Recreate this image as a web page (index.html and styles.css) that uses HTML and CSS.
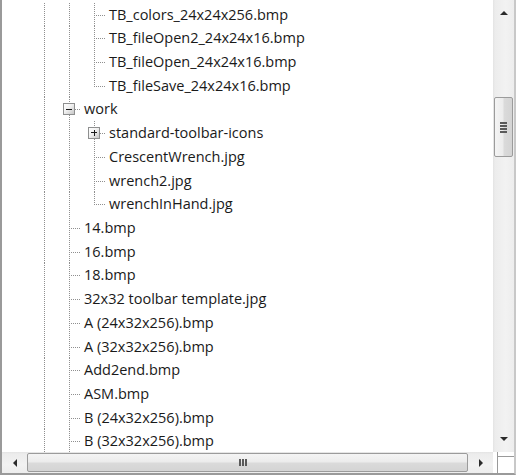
FILE: index.html
```html
<!DOCTYPE html>
<html>
<head>
<meta charset="utf-8">
<link rel="stylesheet" href="styles.css">
</head>
<body>
<div class="frame">
  <div class="view">
    <div class="tree">
      <div class="row"><span class="g"></span><span class="g v"></span><span class="g v"></span><span class="g t"></span><span class="label">TB_colors_24x24x256.bmp</span></div>
      <div class="row"><span class="g"></span><span class="g v"></span><span class="g v"></span><span class="g t"></span><span class="label">TB_fileOpen2_24x24x16.bmp</span></div>
      <div class="row"><span class="g"></span><span class="g v"></span><span class="g v"></span><span class="g t"></span><span class="label">TB_fileOpen_24x24x16.bmp</span></div>
      <div class="row"><span class="g"></span><span class="g v"></span><span class="g v"></span><span class="g l"></span><span class="label">TB_fileSave_24x24x16.bmp</span></div>
      <div class="row"><span class="g"></span><span class="g v"></span><span class="g t"><span class="box minus"></span></span><span class="label">work</span></div>
      <div class="row"><span class="g"></span><span class="g v"></span><span class="g v"></span><span class="g t"><span class="box plus"></span></span><span class="label">standard-toolbar-icons</span></div>
      <div class="row"><span class="g"></span><span class="g v"></span><span class="g v"></span><span class="g t"></span><span class="label">CrescentWrench.jpg</span></div>
      <div class="row"><span class="g"></span><span class="g v"></span><span class="g v"></span><span class="g t"></span><span class="label">wrench2.jpg</span></div>
      <div class="row"><span class="g"></span><span class="g v"></span><span class="g v"></span><span class="g l"></span><span class="label">wrenchInHand.jpg</span></div>
      <div class="row"><span class="g"></span><span class="g v"></span><span class="g t"></span><span class="label">14.bmp</span></div>
      <div class="row"><span class="g"></span><span class="g v"></span><span class="g t"></span><span class="label">16.bmp</span></div>
      <div class="row"><span class="g"></span><span class="g v"></span><span class="g t"></span><span class="label">18.bmp</span></div>
      <div class="row"><span class="g"></span><span class="g v"></span><span class="g t"></span><span class="label">32x32 toolbar template.jpg</span></div>
      <div class="row"><span class="g"></span><span class="g v"></span><span class="g t"></span><span class="label">A (24x32x256).bmp</span></div>
      <div class="row"><span class="g"></span><span class="g v"></span><span class="g t"></span><span class="label">A (32x32x256).bmp</span></div>
      <div class="row"><span class="g"></span><span class="g v"></span><span class="g t"></span><span class="label">Add2end.bmp</span></div>
      <div class="row"><span class="g"></span><span class="g v"></span><span class="g t"></span><span class="label">ASM.bmp</span></div>
      <div class="row"><span class="g"></span><span class="g v"></span><span class="g t"></span><span class="label">B (24x32x256).bmp</span></div>
      <div class="row"><span class="g"></span><span class="g v"></span><span class="g t"></span><span class="label">B (32x32x256).bmp</span></div>
    </div>
    <div class="vscroll">
      <div class="btn"><span class="arr up"></span></div>
      <div class="track">
        <div class="sp1"></div>
        <div class="thumb v"><span class="grip"><i></i><i></i><i></i><i></i></span></div>
        <div class="sp2"></div>
      </div>
      <div class="btn"><span class="arr down"></span></div>
    </div>
    <div class="hscroll">
      <div class="btn"><span class="arr left"></span></div>
      <div class="track h">
        <div class="thumb h"><span class="grip"><i></i><i></i><i></i></span></div>
      </div>
      <div class="btn"><span class="arr right"></span></div>
    </div>
    <div class="corner"><span class="cv"></span><span class="ch"></span></div>
  </div>
</div>
</body>
</html>
```

FILE: styles.css
```css
html, body { margin: 0; padding: 0; background: #fff; }
.frame {
  width: 516px;
  height: 475px;
  box-sizing: border-box;
  border-left: 2px solid #9a9a9a;
  border-right: 2px solid #c8c8c8;
  border-bottom: 2px solid #9a9a9a;
  overflow: hidden;
}
.view {
  display: grid;
  grid-template-columns: 491px 21px;
  grid-template-rows: 452px 21px;
  height: 473px;
}
.tree {
  padding-top: 2.5px;
  overflow: hidden;
  font-family: "Open Sans", sans-serif;
  font-size: 14.5px;
  color: #1a1a1a;
}
.row {
  display: flex;
  align-items: stretch;
  height: 23.72px;
  padding-left: 5px;
  white-space: nowrap;
}
.g {
  width: 25px;
  flex: none;
  display: flex;
  align-items: center;
}
.g.v {
  background: repeating-linear-gradient(to bottom, #8f8f8f 0 1px, transparent 1px 2px) 12px 0 / 1px 100% no-repeat;
}
.g.t {
  background:
    repeating-linear-gradient(to bottom, #8f8f8f 0 1px, transparent 1px 2px) 12px 0 / 1px 100% no-repeat,
    repeating-linear-gradient(to right, #8f8f8f 0 1px, transparent 1px 2px) 12px 12px / 12px 1px no-repeat;
}
.g.l {
  background:
    repeating-linear-gradient(to bottom, #8f8f8f 0 1px, transparent 1px 2px) 12px 0 / 1px 12px no-repeat,
    repeating-linear-gradient(to right, #8f8f8f 0 1px, transparent 1px 2px) 12px 12px / 12px 1px no-repeat;
}
.label {
  margin-left: 2px;
  line-height: 23.72px;
}
.box {
  width: 12px;
  height: 12px;
  box-sizing: border-box;
  margin-left: 6px;
  border: 1px solid #8e8f8f;
  background: linear-gradient(135deg, #ffffff 0%, #f0f0f0 45%, #c6c6c6 100%);
  display: flex;
  align-items: center;
  justify-content: center;
  position: relative;
}
.box::before {
  content: "";
  width: 6px;
  height: 1px;
  background: #1a1a1a;
}
.box.plus::after {
  content: "";
  position: absolute;
  width: 1px;
  height: 6px;
  left: 4.5px;
  top: 2px;
  background: #1a1a1a;
}

/* scrollbars */
.vscroll {
  display: flex;
  flex-direction: column;
  background: linear-gradient(to right, #e3e3e3 0, #ececec 2px, #f2f2f2 60%, #ededed 100%);
}
.btn {
  flex: none;
  width: 21px;
  height: 21px;
  display: flex;
  align-items: center;
  justify-content: center;
}
.vscroll .btn:first-child { height: 26px; }
.vscroll .btn:last-child { height: 26px; }
.track { flex: 1; display: flex; flex-direction: column; }
.sp1 { height: 71px; flex: none; }
.thumb.v {
  height: 60px;
  margin: 0 1px 0 1px;
  box-sizing: border-box;
  border: 1px solid #9b9b9b;
  border-radius: 2px;
  background: linear-gradient(to right, #f4f4f4 0%, #ececec 45%, #dadada 55%, #d4d4d4 100%);
  display: flex;
  align-items: center;
  justify-content: center;
}
.thumb.v .grip { display: flex; flex-direction: column; gap: 1px; }
.thumb.v .grip i { display: block; width: 7px; height: 2px; background: #5a5a5a; }
.arr { width: 0; height: 0; border: 4px solid transparent; }
.arr.up { border-bottom: 4px solid #2b2b2b; border-top: 0; }
.arr.down { border-top: 4px solid #2b2b2b; border-bottom: 0; }
.arr.left { border-right: 4px solid #2b2b2b; border-left: 0; }
.arr.right { border-left: 4px solid #2b2b2b; border-right: 0; }

.hscroll {
  display: flex;
  background: linear-gradient(to bottom, #e3e3e3 0, #ececec 2px, #f2f2f2 60%, #ededed 100%);
}
.hscroll .btn:first-child { width: 25px; }
.hscroll .btn:last-child { width: 25px; }
.track.h { flex-direction: row; align-items: stretch; }
.thumb.h {
  flex: 1;
  margin: 1px 0;
  box-sizing: border-box;
  border: 1px solid #9b9b9b;
  border-radius: 2px;
  background: linear-gradient(to bottom, #f4f4f4 0%, #ececec 45%, #dadada 55%, #d4d4d4 100%);
  display: flex;
  align-items: center;
  justify-content: center;
  padding-right: 10px;
}
.thumb.h .grip { display: flex; flex-direction: row; gap: 1px; }
.thumb.h .grip i { display: block; width: 2px; height: 7px; background: #5a5a5a; }

.corner {
  background: #fff;
  display: flex;
  padding-left: 4px;
}
.corner .cv { width: 1px; background: #9a9a9a; flex: none; }
.corner .ch { flex: 1; height: 1px; margin-top: 4px; background: #9a9a9a; }
```
